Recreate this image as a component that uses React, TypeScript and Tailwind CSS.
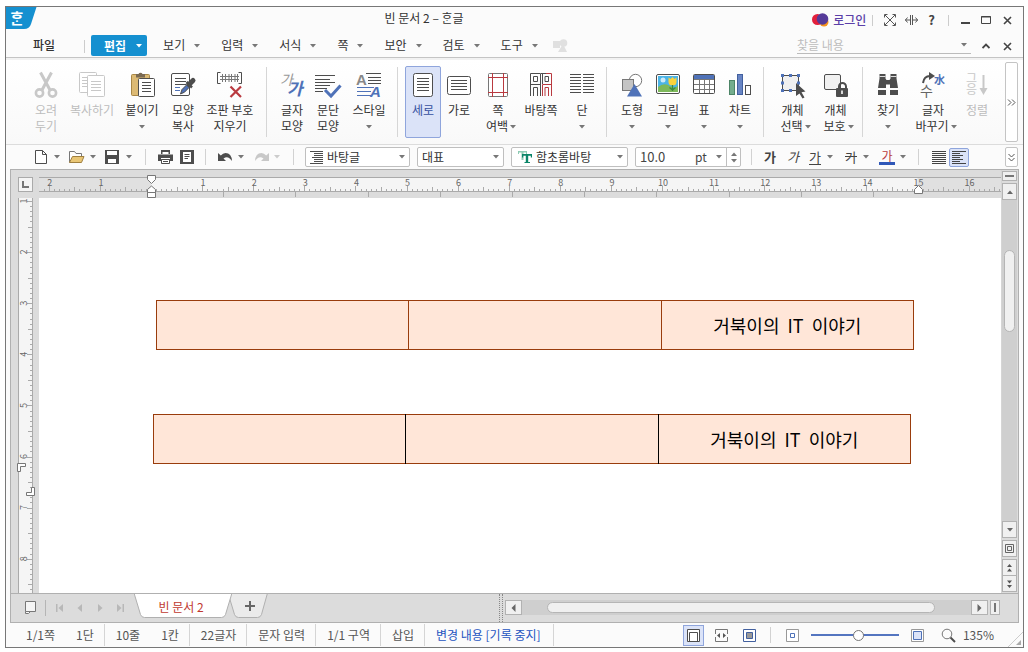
import type { ReactNode } from "react";

const INK = "#4d4d4d";
const BLUE = "#4f72b8";
const RED = "#b93a40";
const FADED = "#c8c8c8";
const FONT = "'Noto Sans CJK KR', sans-serif";

function Caret({ className = "text-[#777]" }: { className?: string }) {
  return (
    <svg width="6" height="4" viewBox="0 0 6 4" className={`inline-block shrink-0 ${className}`} aria-hidden="true">
      <path d="M0 0h6L3 3.5z" fill="currentColor" />
    </svg>
  );
}

function Icon({ children }: { children: ReactNode }) {
  return (
    <svg width="28" height="28" viewBox="0 0 28 28" fill="none" className="shrink-0 overflow-visible" aria-hidden="true">
      {children}
    </svg>
  );
}

function Lines({ x1, x2, ys, color = INK }: { x1: number; x2: number; ys: number[]; color?: string }) {
  return <path d={ys.map((y) => `M${x1} ${y}.5H${x2}`).join("")} stroke={color} />;
}

const icons = {
  cut: (
    <Icon>
      <path d="M8.5 1.5 L18 19 M19.5 1.5 L10 19" stroke={FADED} strokeWidth="3" />
      <circle cx="7.5" cy="22" r="3.6" stroke={FADED} strokeWidth="2.6" />
      <circle cx="20.5" cy="22" r="3.6" stroke={FADED} strokeWidth="2.6" />
    </Icon>
  ),
  copy: (
    <Icon>
      <rect x="1.5" y="1.5" width="17" height="20" rx="1" stroke={FADED} fill="#fff" />
      <Lines x1={4} x2={12} ys={[6, 9, 12, 15]} color={FADED} />
      <rect x="9.5" y="4.5" width="17" height="21" rx="1" stroke={FADED} fill="#fff" />
      <Lines x1={13} x2={23} ys={[10, 13, 16, 19]} color={FADED} />
    </Icon>
  ),
  paste: (
    <Icon>
      <rect x="3.5" y="3.5" width="18" height="21" rx="1" fill="#dcba74" stroke="#a88747" />
      <path d="M8 6.5V3h2.5a2.2 2.2 0 0 1 4 0H17v3.500z" fill="#7a6a52" />
      <rect x="10.500" y="7.500" width="16" height="18" rx="1" stroke={INK} fill="#fff" />
      <Lines x1={14} x2={23} ys={[11, 14, 17, 20]} />
    </Icon>
  ),
  format: (
    <Icon>
      <rect x="2.500" y="2.500" width="18" height="22" rx="1.500" stroke={INK} fill="#fff" />
      <Lines x1={6} x2={17} ys={[7, 10, 13]} />
      <Lines x1={6} x2={11} ys={[16, 19]} color={BLUE} />
      <path d="M11.500 23 L13 18.500 L19 12.500 L21.500 15 L15.500 21.200z" fill={BLUE} stroke={INK} />
      <path d="M17.500 11 L23 16.500" stroke={INK} strokeWidth="2.500" />
      <path d="M20 13.500 L24 9.500" stroke={INK} strokeWidth="5" strokeLinecap="round" />
    </Icon>
  ),
  marks: (
    <Icon>
      <path d="M4.500 1.500H1.500V12.500H4.500 M22.500 1.500H25.500V12.500H22.500" stroke={INK} />
      <path d="M4 5.500H23 M4 8.500H23 M6.500 3V11 M9.500 3V11 M13 3V11 M15.500 3V11 M19 3V11 M21.500 3V11" stroke="#777" />
      <path d="M14.500 15.500 L25 26 M25 15.500 L14.500 26" stroke={RED} strokeWidth="2.200" />
    </Icon>
  ),
  letter: (
    <Icon>
      <text x="2" y="14" fontSize="14" fill="#999" fontFamily={FONT} fontStyle="italic">가</text>
      <text x="9" y="24" fontSize="17" fill={BLUE} fontFamily={FONT} fontWeight="700" fontStyle="italic">가</text>
    </Icon>
  ),
  paragraph: (
    <Icon>
      <Lines x1={1} x2={21} ys={[4, 11]} />
      <Lines x1={1} x2={16} ys={[8, 14]} />
      <Lines x1={1} x2={13} ys={[17]} />
      <Lines x1={1} x2={9} ys={[20]} />
      <path d="M11 19 L17 25 L26.500 14.500" stroke={BLUE} strokeWidth="3" />
    </Icon>
  ),
  style: (
    <Icon>
      <text x="1" y="13.500" fontSize="15" fill="#888" fontFamily="'Liberation Sans', sans-serif" fontWeight="700">A</text>
      <Lines x1={11} x2={26} ys={[2]} />
      <Lines x1={13} x2={26} ys={[6, 9, 12]} />
      <Lines x1={2} x2={19} ys={[16]} color={BLUE} />
      <Lines x1={2} x2={16} ys={[20, 24]} color={BLUE} />
      <text x="15" y="26" fontSize="15" fill={BLUE} fontFamily="'Liberation Sans', sans-serif" fontWeight="700" fontStyle="italic">A</text>
    </Icon>
  ),
  portrait: (
    <Icon>
      <rect x="4.500" y="2.500" width="19" height="23" rx="2" stroke={INK} fill="#fff" />
      <Lines x1={8} x2={20} ys={[7, 10, 13, 16, 19]} />
    </Icon>
  ),
  landscape: (
    <Icon>
      <rect x="2.500" y="5.500" width="23" height="18" rx="2" stroke={INK} fill="#fff" />
      <Lines x1={6} x2={22} ys={[9, 12, 15, 18]} />
    </Icon>
  ),
  margins: (
    <Icon>
      <rect x="4.500" y="2.500" width="19" height="23" rx="1" stroke="#777" fill="#fff" />
      <path d="M8.500 2V26 M19.500 2V26 M4 6.500H24 M4 21.500H24" stroke={RED} />
    </Icon>
  ),
  master: (
    <Icon>
      <path d="M13.500 2.500H3.500V25 M13.500 2.500V25 M3.500 13.500H13.500" stroke={INK} />
      <path d="M6.500 5.500h4v5h-4z M6.500 25V16.500h4V25" stroke={INK} />
      <path d="M14 2.500H19" stroke={INK} />
      <path d="M19 2.500H24.500V25 M15.500 25V13.500H24.500" stroke={RED} />
      <path d="M15.500 2.500V13 M18 5.500h3.500v5H18z" stroke={INK} />
      <path d="M18 25V16.500h3.500V25" stroke={RED} />
    </Icon>
  ),
  columns: (
    <Icon>
      <Lines x1={2} x2={13} ys={[3, 6, 9, 12, 15, 18, 21]} />
      <Lines x1={15} x2={26} ys={[3, 6, 9, 12, 15, 18, 21]} />
    </Icon>
  ),
  shapes: (
    <Icon>
      <circle cx="17.500" cy="9.500" r="6.200" stroke="#777" fill="#fff" />
      <rect x="4.500" y="8.500" width="11" height="11" fill="#c4c4c4" stroke="#777" />
      <path d="M16.500 13 L24 25.500H9z" fill={BLUE} />
    </Icon>
  ),
  picture: (
    <Icon>
      <rect x="2.500" y="3.500" width="23" height="19" rx="1.500" stroke={INK} fill="#fff" />
      <rect x="4" y="5" width="20" height="16" fill="#4bb4e6" />
      <path d="M4 16 Q10 11 16 15 T24 14 V21 H4z" fill="#7db85a" />
      <circle cx="9" cy="9" r="2.500" fill="#cdeaf8" />
      <path d="M14.500 6.500 L16.500 8 L18.500 6 L20.500 8 L22.500 6.500 V11 a4 3.500 0 0 1-8 0z" fill="#fbd23c" />
      <path d="M18.500 14V20 M18.500 19 L15.500 16.500 M18.500 19 L21.500 16.500" stroke="#3d8a3d" strokeWidth="1.300" />
    </Icon>
  ),
  table: (
    <Icon>
      <rect x="3.500" y="3.500" width="21" height="19" rx="1" stroke={INK} fill="#fff" />
      <rect x="4" y="4" width="20" height="4" fill={BLUE} />
      <path d="M4 8.500H24 M4 13.500H24 M4 18.500H24 M9.500 8.500V22 M14.500 8.500V22 M19.500 8.500V22" stroke="#777" />
    </Icon>
  ),
  chart: (
    <Icon>
      <rect x="3.500" y="9.500" width="5" height="14" fill="#74ad8d" stroke="#4d8567" />
      <rect x="11.500" y="3.500" width="5" height="20" fill="#6885c4" stroke="#42609f" />
      <rect x="19.500" y="14.500" width="5" height="9" fill="#fff" stroke={INK} />
    </Icon>
  ),
  select: (
    <Icon>
      <rect x="3.500" y="4.500" width="16" height="15" stroke={INK} fill="#f0f0f0" />
      <path d="M2 3h3v3h-3z M10 3h3v3h-3z M18 3h3v3h-3z M2 10.500h3v3h-3z M18 10.500h3v3h-3z M2 18h3v3h-3z M10 18h3v3h-3z" fill={BLUE} />
      <path d="M17 12 L26.500 20.500 L22.500 21.200 L25.500 26.500 L23.500 27.500 L20.500 22.500 L17 25z" fill={INK} />
    </Icon>
  ),
  protect: (
    <Icon>
      <rect x="2.500" y="3.500" width="16" height="15" rx="1.500" stroke={INK} fill="#f0f0f0" />
      <path d="M17 18v-2.500a3.500 3.500 0 0 1 7 0V18" stroke={INK} strokeWidth="2" />
      <rect x="14" y="17" width="12" height="9" rx="1" fill={INK} />
      <path d="M20 19.500v3.500" stroke="#fff" strokeWidth="1.600" />
    </Icon>
  ),
  find: (
    <Icon>
      <path d="M5.500 3H11.500V7.500L12.500 9H15.500L16.500 7.500V3H22.500V7.500L24 17H16V13.500H12V17H4L5.500 7.500z" fill={INK} />
      <path d="M4 19h8v5H4z M16 19h8v5h-8z" fill={INK} />
      <path d="M5.500 5.500h6 M16.500 5.500h6" stroke="#ddd" />
    </Icon>
  ),
  convert: (
    <Icon>
      <path d="M4 12 Q5 5 11 5" stroke={INK} strokeWidth="2" />
      <path d="M10 1 L16 5 L10 9z" fill={INK} />
      <text x="15" y="13" fontSize="11" fill={BLUE} fontFamily={FONT} fontWeight="700">水</text>
      <text x="1" y="24.500" fontSize="14" fill="#666" fontFamily={FONT}>수</text>
    </Icon>
  ),
  sort: (
    <Icon>
      <text x="3" y="12" fontSize="12" fill={FADED} fontFamily={FONT}>그</text>
      <text x="3" y="23" fontSize="12" fill={FADED} fontFamily={FONT}>응</text>
      <path d="M20.500 4V18" stroke={FADED} strokeWidth="2" />
      <path d="M16.500 17h8L20.500 24z" fill={FADED} />
    </Icon>
  ),
};

type Tool = {
  icon: keyof typeof icons;
  lines: string[];
  width: string;
  caret?: boolean;
  disabled?: boolean;
  active?: boolean;
};

const ribbon: Tool[][] = [
  [
    { icon: "cut", lines: ["오려", "두기"], width: "w-[42px]", disabled: true },
    { icon: "copy", lines: ["복사하기"], width: "w-[50px]", disabled: true },
    { icon: "paste", lines: ["붙이기"], width: "w-[50px]", caret: true },
    { icon: "format", lines: ["모양", "복사"], width: "w-[32px]" },
    { icon: "marks", lines: ["조판 부호", "지우기"], width: "w-[62px]" },
  ],
  [
    { icon: "letter", lines: ["글자", "모양"], width: "w-[36px]" },
    { icon: "paragraph", lines: ["문단", "모양"], width: "w-[36px]" },
    { icon: "style", lines: ["스타일"], width: "w-[46px]", caret: true },
  ],
  [
    { icon: "portrait", lines: ["세로"], width: "w-[36px]", active: true },
    { icon: "landscape", lines: ["가로"], width: "w-[36px]" },
    { icon: "margins", lines: ["쪽", "여백"], width: "w-[42px]", caret: true },
    { icon: "master", lines: ["바탕쪽"], width: "w-[44px]" },
    { icon: "columns", lines: ["단"], width: "w-[38px]", caret: true },
  ],
  [
    { icon: "shapes", lines: ["도형"], width: "w-[36px]", caret: true },
    { icon: "picture", lines: ["그림"], width: "w-[36px]", caret: true },
    { icon: "table", lines: ["표"], width: "w-[36px]", caret: true },
    { icon: "chart", lines: ["차트"], width: "w-[36px]", caret: true },
  ],
  [
    { icon: "select", lines: ["개체", "선택"], width: "w-[43px]", caret: true },
    { icon: "protect", lines: ["개체", "보호"], width: "w-[43px]", caret: true },
  ],
  [
    { icon: "find", lines: ["찾기"], width: "w-[36px]", caret: true },
    { icon: "convert", lines: ["글자", "바꾸기"], width: "w-[54px]", caret: true },
    { icon: "sort", lines: ["정렬"], width: "w-[34px]", disabled: true },
  ],
];

function RibbonButton({ tool }: { tool: Tool }) {
  const tone = tool.disabled ? "text-[#bdbdbd]" : tool.active ? "text-[#3550a0]" : "text-[#333]";
  const frame = tool.active ? "border-[#8fa5dc] bg-[#dbe3f8]" : "border-transparent";
  return (
    <button
      type="button"
      disabled={tool.disabled}
      className={`flex h-[72px] shrink-0 flex-col items-center rounded-xs border pt-1 leading-4 whitespace-nowrap ${tool.width} ${tone} ${frame}`}
    >
      {icons[tool.icon]}
      <span className="mt-[3px] h-4">{tool.lines[0]}</span>
      <span className="flex h-4 items-center gap-0.5">
        {tool.lines[1]}
        {tool.caret && <Caret className={tool.lines[1] ? "-mr-1.5 mt-0.5 text-[#777]" : "mt-0.5 text-[#777]"} />}
      </span>
    </button>
  );
}

const menus = ["보기", "입력", "서식", "쪽", "보안", "검토", "도구"];

function Header() {
  return (
    <header className="bg-[#fbfbfb]">
      <div className="flex h-[26px] items-start">
        <div className="relative h-[22px] w-[30px] shrink-0 text-center text-[15px] leading-[22px] font-bold text-white">
          <svg width="31" height="22" viewBox="0 0 31 22" className="absolute top-0 left-0" aria-hidden="true">
            <path d="M0 0H30.500L25 17Q23.500 22 18 22H0z" fill="#1590d0" />
          </svg>
          <span className="relative mr-2">{"\u1112\u119E\u11AB"}</span>
        </div>
        <h1 className="flex-1 text-center leading-[22px] text-[#333]">빈 문서 2 – {"\u1112\u119E\u11AB"}글</h1>
        <div className="flex h-[26px] items-center pr-[11px] text-[#444]">
          <a href="#login" className="flex items-center gap-1 font-medium text-[#5b3fa8]">
            <svg width="17" height="14" viewBox="0 0 17 14" aria-hidden="true">
              <circle cx="5.500" cy="6.500" r="5.500" fill="#e2203c" />
              <circle cx="12" cy="9" r="4.500" fill="#f7941d" />
              <circle cx="10.500" cy="6" r="5.800" fill="#553a99" />
            </svg>
            로그인
          </a>
          <span className="mr-[11px] ml-[6px] h-[11px] w-px bg-[#ccc]" />
          <button type="button" aria-label="전체 화면" className="mr-[9px]">
            <svg width="12" height="12" viewBox="0 0 12 12" fill="none" stroke="#555" aria-hidden="true">
              <path d="M.5 3.500V.5H3.500 M8.500 .5H11.500V3.500 M11.500 8.500V11.500H8.500 M3.500 11.500H.5V8.500 M1 1L11 11 M11 1L1 11" />
            </svg>
          </button>
          <button type="button" aria-label="크기 조절" className="mr-[10px]">
            <svg width="13" height="12" viewBox="0 0 13 12" fill="none" stroke="#555" aria-hidden="true">
              <path d="M5.500 1V11 M7.500 1V11 M0 6H5 M8 6H13 M2.500 3.500L.5 6L2.500 8.500 M10.500 3.500L12.500 6L10.500 8.500" />
            </svg>
          </button>
          <button type="button" aria-label="도움말" className="text-[13px] leading-4 font-bold">?</button>
          <span className="mr-[11px] ml-[13px] h-[11px] w-px bg-[#ccc]" />
          <button type="button" aria-label="최소화" className="mr-[11px]">
            <svg width="10" height="10" aria-hidden="true"><path d="M1 7h9v2H1z" fill="#444" /></svg>
          </button>
          <button type="button" aria-label="최대화" className="mr-[12px]">
            <svg width="10" height="10" fill="none" stroke="#444" aria-hidden="true"><path d="M.5 1.500H9.500V8.500H.5z M0 2H10" /></svg>
          </button>
          <button type="button" aria-label="닫기">
            <svg width="9" height="9" fill="none" stroke="#444" strokeWidth="1.600" aria-hidden="true"><path d="M1 1L8 8M8 1L1 8" /></svg>
          </button>
        </div>
      </div>

      <nav className="flex h-[25px] items-start border-b border-[#c4c4c4] pr-[11px] leading-[21px] text-[#333]">
        <button type="button" className="mt-px ml-[27px] h-[21px] font-medium">파일</button>
        <span className="mt-[7px] mr-[6px] ml-[29px] h-[13px] w-px bg-[#ccc]" />
        <button type="button" className="mt-0.5 mr-4 flex h-[21px] w-14 items-center justify-center gap-2.5 rounded-xs bg-[#1590d0] pb-px pl-2 font-bold text-white">
          편집
          <Caret className="mt-0.5 text-white" />
        </button>
        <div className="mt-px flex gap-[21px]">
          {menus.map((m) => (
            <button type="button" key={m} className="flex h-[21px] items-center gap-[9px]">
              {m}
              <Caret className="mt-0.5 text-[#777]" />
            </button>
          ))}
        </div>
        <svg width="15" height="13" viewBox="0 0 15 13" className="mt-1.5 ml-[15px]" fill="#e0e0e0" aria-hidden="true">
          <path d="M0 2h7v7H0z M10 5L14 13H5z" />
          <circle cx="10.500" cy="4" r="3.800" />
        </svg>
        <div className="ml-auto flex h-[21px] w-[174px] items-center border-b border-[#bbb] pt-1">
          <input aria-label="찾을 내용" placeholder="찾을 내용" className="h-4 w-0 flex-1 bg-transparent leading-4 outline-none placeholder:text-[#bdbdbd]" />
          <Caret className="mr-1 text-[#777]" />
        </div>
        <button type="button" aria-label="리본 접기" className="mt-[9px] ml-[11px]">
          <svg width="8" height="8" fill="none" stroke="#444" strokeWidth="1.800" className="block" aria-hidden="true"><path d="M.5 6L4 2.500L7.500 6" /></svg>
        </button>
        <button type="button" aria-label="문서 닫기" className="mt-[9px] ml-[13px]">
          <svg width="9" height="9" fill="none" stroke="#444" strokeWidth="1.600" className="block" aria-hidden="true"><path d="M1 1L8 8M8 1L1 8" /></svg>
        </button>
      </nav>
    </header>
  );
}

function Ribbon() {
  return (
    <section aria-label="편집" className="flex border-t-2 border-b border-t-[#f2f2f2] border-b-[#dcdcdc] bg-linear-to-b from-white to-[#f9f9f9] pt-1.5 pb-1.5 pl-[19px] pr-[5px]">
      {ribbon.map((group, i) => (
        <div key={i} className="flex">
          {i > 0 && <span className="mt-px mr-[7px] ml-[5px] h-[70px] w-px bg-[#d6d6d6]" />}
          {group.map((tool) => (
            <RibbonButton key={tool.icon} tool={tool} />
          ))}
        </div>
      ))}
      <button type="button" aria-label="더 보기" className="-mt-1 -mb-1 ml-auto flex w-[13px] items-center justify-center rounded-xs border border-[#c4c4c4] bg-white">
        <svg width="9" height="7" fill="none" stroke="#555" aria-hidden="true"><path d="M1 .5L4 3.500L1 6.500M5 .5L8 3.500L5 6.500" /></svg>
      </button>
    </section>
  );
}

function Divider({ className = "mx-3" }: { className?: string }) {
  return <span className={`h-4 w-px shrink-0 bg-[#d2d2d2] ${className}`} />;
}

function Combo({ label, value, width, lead }: { label: string; value: string; width: string; lead?: ReactNode }) {
  return (
    <label className={`flex h-5 items-center rounded-xs border border-[#bfbfbf] bg-white pr-1 pl-1 ${width}`}>
      {lead}
      <select aria-label={label} defaultValue={value} className="h-[18px] w-0 flex-1 appearance-none bg-transparent leading-[18px] text-[#333] outline-none">
        <option>{value}</option>
      </select>
      <Caret />
    </label>
  );
}

function Toolbar() {
  return (
    <section aria-label="서식 도구 모음" className="flex h-6 items-center bg-[#fbfbfb] pr-[5px] pl-7 text-[#444]">
      <button type="button" aria-label="새 문서" className="flex items-center gap-1.5">
        <svg width="14" height="16" fill="#fff" stroke={INK} aria-hidden="true"><path d="M1.500 1.500H8.500L12.500 5.500V14.500H1.500z M8.500 1.500V5.500H12.500" /></svg>
        <Caret />
      </button>
      <button type="button" aria-label="불러오기" className="ml-2 flex items-center gap-[5px]">
        <svg width="17" height="16" fill="none" aria-hidden="true">
          <path d="M1.500 13.500V2.500H6.500L8 4.500H13.500V7" stroke="#777" fill="#fff" />
          <path d="M4.500 7.500H16L13.500 13.500H1.500z" fill="#e9c675" stroke="#a08040" />
        </svg>
        <Caret />
      </button>
      <button type="button" aria-label="저장" className="ml-[9px] flex items-center gap-[7px]">
        <svg width="14" height="16" aria-hidden="true">
          <path d="M0 1h14v14H0z" fill={INK} />
          <path d="M2 2h10v4H2z M3 10h8v4H3z" fill="#fff" />
        </svg>
        <Caret />
      </button>
      <Divider className="mr-3 ml-[13px]" />
      <button type="button" aria-label="인쇄" className="mr-[7px]">
        <svg width="15" height="16" className="block" aria-hidden="true">
          <path d="M3 1h9v4H3z M0 5.500h15v6.500H0z" fill={INK} />
          <path d="M4.500 3h6v2h-6z M3 9h9v1.200H3z" fill="#fff" />
          <path d="M3.500 10.500h8v4h-8z" fill="#fff" stroke={INK} />
          <path d="M5 12.500h5" stroke={INK} />
        </svg>
      </button>
      <button type="button" aria-label="미리 보기">
        <svg width="14" height="16" className="block" aria-hidden="true">
          <path d="M0 1h14v14H0z" fill={INK} />
          <path d="M3 3h8v10H3z" fill="#fff" />
          <path d="M4.500 5.500h5M4.500 7.500h5M4.500 9.500h3.500" stroke={INK} />
        </svg>
      </button>
      <Divider className="mr-3 ml-[11px]" />
      <button type="button" aria-label="되돌리기" className="flex items-center gap-[5px]">
        <svg width="15" height="12" aria-hidden="true"><path d="M0 2V10H8L5.500 7.500Q10 4 14 10Q13.500 2 7.500 2Q5 2 2.800 4.500z" fill={INK} /></svg>
        <Caret />
      </button>
      <button type="button" aria-label="다시 실행" disabled className="ml-2.5 flex items-center gap-[5px]">
        <svg width="15" height="12" aria-hidden="true"><path d="M15 2V10H7L9.500 7.500Q5 4 1 10Q1.500 2 7.500 2Q10 2 12.200 4.500z" fill={FADED} /></svg>
        <Caret className="text-[#ccc]" />
      </button>
      <Divider className="mr-[11px] ml-[13px]" />
      <div className="flex gap-[7px]">
        <Combo
          label="스타일"
          value="바탕글"
          width="w-[105px]"
          lead={
            <svg width="13" height="13" className="mr-1" aria-hidden="true">
              <path d="M0 .5h13M4 2.500h9M4 4.500h9M2 6.500h11M4 8.500h9M4 10.500h9M0 12.500h13" stroke={INK} />
            </svg>
          }
        />
        <Combo label="언어" value="대표" width="w-[87px]" />
        <Combo
          label="글꼴"
          value="함초롬바탕"
          width="w-[117px]"
          lead={
            <svg width="14" height="14" className="mr-1 ml-0.5" aria-hidden="true">
              <path d="M0 1h9v3H8V2.500H5.500V10H3.500V2.500H1V4H0z" fill="#8ecbb4" />
              <path d="M4 4h10v3.500h-1.200V5.800h-2.600V12H12v1H6.500v-1h1.300V5.800H5.200V7.500H4z" fill="#0b8568" />
            </svg>
          }
        />
        <div className="flex h-5 w-[106px] items-center rounded-xs border border-[#bfbfbf] bg-white pl-1">
          <input aria-label="글자 크기" defaultValue="10.0" className="w-0 flex-1 bg-transparent text-[13px] leading-[18px] outline-none" />
          <select aria-label="단위" defaultValue="pt" className="mr-1 w-[17px] appearance-none bg-transparent leading-[18px] outline-none">
            <option>pt</option>
          </select>
          <Caret className="mr-1 text-[#777]" />
          <span className="flex h-full w-[14px] flex-col items-center justify-around border-l border-[#bfbfbf] py-0.5">
            <button type="button" aria-label="크게" className="flex"><Caret className="rotate-180 text-[#777]" /></button>
            <button type="button" aria-label="작게" className="flex"><Caret /></button>
          </span>
        </div>
      </div>
      <Divider className="mr-3 ml-2.5" />
      <div className="flex items-center text-[13px] leading-4">
        <button type="button" aria-label="진하게" className="w-[23px] text-left font-bold">가</button>
        <button type="button" aria-label="기울임" className="w-[22px] text-left italic">가</button>
        <button type="button" aria-label="밑줄" className="flex w-9 items-center gap-[6px]">
          <span className="border-b border-[#444] leading-[14px]">가</span>
          <Caret />
        </button>
        <button type="button" aria-label="취소선" className="flex w-[34px] items-center gap-[6px]">
          <span className="line-through">가</span>
          <Caret />
        </button>
        <button type="button" aria-label="글자 색" className="flex items-center gap-[5px]">
          <span className="w-4 border-b-3 border-[#3058b8] text-center text-xs leading-[13px] text-[#b93a40]">가</span>
          <Caret />
        </button>
      </div>
      <Divider className="mr-2.5 ml-3" />
      <button type="button" aria-label="양쪽 정렬" className="p-[3px]">
        <svg width="14" height="13" className="block" aria-hidden="true"><path d="M0 .5h14M0 2.500h14M0 4.500h14M0 6.500h14M0 8.500h14M0 10.500h14M0 12.500h14" stroke="#444" /></svg>
      </button>
      <button type="button" aria-label="왼쪽 정렬" className="rounded-xs border border-[#8fa5dc] bg-[#dbe3f8] p-[2px]">
        <svg width="14" height="13" className="block" aria-hidden="true"><path d="M0 .5h14M0 2.500h8M0 4.500h11M0 6.500h8M0 8.500h11M0 10.500h8M0 12.500h14" stroke="#444" /></svg>
      </button>
      <button type="button" aria-label="도구 더 보기" className="ml-auto flex h-5 w-[13px] items-center justify-center rounded-xs border border-[#c4c4c4] bg-white">
        <svg width="7" height="9" fill="none" stroke="#555" aria-hidden="true"><path d="M.5 1L3.500 4L6.500 1M.5 5L3.500 8L6.500 5" /></svg>
      </button>
    </section>
  );
}

const CM = 51.1;
const tickAt = (origin: number, i: number) => Math.round(origin + (i * CM) / 10) + 0.5;
const range = (from: number, to: number) => Array.from({ length: to - from + 1 }, (_, i) => from + i);
const tickLength = (i: number) => (i % 10 === 0 ? 5 : i % 5 === 0 ? 4 : 2);

function HorizontalRuler() {
  const zero = 112;
  return (
    <svg className="h-7 w-full" aria-label="가로 눈금자">
      <rect x="0" y="7" width="100%" height="15" fill="#e0e0e0" />
      <rect x={zero} y="7" width={CM * 15} height="15" fill="#f5f5f5" />
      <path d="M0 7.500H3000 M0 21.500H3000" stroke="#aaa" />
      <path d={range(-21, 400).map((i) => `M${tickAt(zero, i)} 21V${21 - tickLength(i)}`).join("")} stroke="#aaa" />
      <path d={range(1, 10).map((i) => `M${Math.round(zero + i * 72.2) + 0.5} 22V27`).join("")} stroke="#aaa" />
      {range(-2, 16)
        .filter((n) => n !== 0)
        .map((n) => (
          <text key={n} x={zero + 1 + n * CM} y="16" fontSize="9" textAnchor="middle" fill="#666" fontFamily={FONT}>
            {Math.abs(n)}
          </text>
        ))}
      <g fill="#fff" stroke="#777">
        <path d="M108.500 5.500H116.500V9.500L112.500 13.500L108.500 9.500z" />
        <path d="M112.500 16L116.500 19.500V22.500H108.500V19.500z M108.500 22.500H116.500V27.500H108.500z" />
        <path d="M879.500 15.500L883.500 19.500V23.500H875.500V19.500z" />
      </g>
    </svg>
  );
}

function VerticalRuler() {
  const one = 3;
  return (
    <div className="relative overflow-hidden">
      <svg className="absolute inset-0 h-full w-7" aria-label="세로 눈금자">
        <rect x="7" y="0" width="15" height="100%" fill="#f5f5f5" />
        <path d="M7.500 0V3000 M21.500 0V3000" stroke="#aaa" />
        <path d={range(0, 400).map((i) => `M21 ${tickAt(one, i)}H${21 - tickLength(i)}`).join("")} stroke="#aaa" />
        {range(1, 8).map((n) => (
          <text
            key={n}
            transform={`translate(16 ${one + (n - 1) * CM}) rotate(-90)`}
            fontSize="9"
            textAnchor="middle"
            fill="#666"
            fontFamily={FONT}
          >
            {n}
          </text>
        ))}
        <g fill="#fff" stroke="#777">
          <path d="M6.500 265.500H14.500V268.500H9.500V273.500H6.500z" />
          <path d="M20.500 289.500H23.500V297.500H15.500V294.500H20.500z" />
        </g>
      </svg>
    </div>
  );
}

const BOX = "flex shrink-0 items-center justify-center border border-[#b2b2b2] bg-[#f0f0f0]";

function VerticalScroll() {
  return (
    <div className="row-span-2 flex flex-col items-center border-l border-[#d5d5d5] bg-[#dcdcdc] py-px pr-px">
      <button type="button" aria-label="가로로 나누기" className={`${BOX} h-2.5 w-[15px]`}>
        <span className="h-0.5 w-[9px] bg-[#777]" />
      </button>
      <button type="button" aria-label="위로" className={`${BOX} mt-0.5 h-[17px] w-[15px]`}>
        <Caret className="rotate-180 text-[#666]" />
      </button>
      <div className="flex w-[15px] flex-1 flex-col items-center bg-[#cfcfcf] pt-[50px]">
        <div className="h-[82px] w-[11px] rounded-full border border-[#b5b5b5] bg-[#f0f0f0]" />
      </div>
      <button type="button" aria-label="아래로" className={`${BOX} h-[17px] w-[15px]`}>
        <Caret className="text-[#666]" />
      </button>
      <button type="button" aria-label="찾아가기" className={`${BOX} mt-0.5 h-[17px] w-[15px]`}>
        <svg width="9" height="9" fill="none" stroke="#666" aria-hidden="true"><path d="M.5 .5h8v8h-8z M2.500 2.500h4v4h-4z" /></svg>
      </button>
      <button type="button" aria-label="이전 쪽" className={`${BOX} mt-0.5 h-[17px] w-[15px]`}>
        <svg width="5" height="8" fill="#555" aria-hidden="true"><path d="M2.500 0L5 3H0z M2.500 4.500L5 7.500H0z" /></svg>
      </button>
      <button type="button" aria-label="다음 쪽" className={`${BOX} -mt-px h-[17px] w-[15px]`}>
        <svg width="5" height="8" fill="#555" aria-hidden="true"><path d="M0 .5h5L2.500 3.500z M0 5h5L2.500 8z" /></svg>
      </button>
    </div>
  );
}

function DocTable({ className, inner, label }: { className: string; inner: string; label: string }) {
  return (
    <table aria-label={label} className={`w-[758px] table-fixed border-collapse border border-[#993c0c] bg-[#ffe6d8] text-lg leading-6 text-black ${className}`}>
      <tbody>
        <tr className="h-[49px]">
          <td />
          <td className={`border-x ${inner}`} />
          <td className="text-center whitespace-pre">거북이의{"  "}IT{"  "}이야기</td>
        </tr>
      </tbody>
    </table>
  );
}

function Arrow({ d, w = 5 }: { d: string; w?: number }) {
  return (
    <svg width={w} height="8" viewBox={`0 0 ${w} 8`} fill="currentColor" className="block" aria-hidden="true">
      <path d={d} />
    </svg>
  );
}

function TabStrip() {
  return (
    <div className="flex h-[30px] items-start border-y border-[#b0b0b0] bg-[#dcdcdc]">
      <button type="button" aria-label="문서 목록" className="mt-[7px] ml-3.5">
        <svg width="12" height="13" fill="#f5f5f5" stroke="#777" className="block" aria-hidden="true"><path d="M.5 .5h10v10H.5z M.5 10.500V12.500H3.500L5.500 10.500" /></svg>
      </button>
      <span className="mt-1.5 ml-2 h-4 w-px bg-[#b5b5b5]" />
      <div className="mt-[10px] ml-2.5 flex gap-3.5 text-[#b8b8b8]">
        <button type="button" aria-label="처음 탭"><Arrow w={7} d="M0 0h1.500v8H0z M7 0v8L2.500 4z" /></button>
        <button type="button" aria-label="이전 탭"><Arrow d="M5 0v8L.5 4z" /></button>
        <button type="button" aria-label="다음 탭" className="ml-0.5"><Arrow d="M0 0v8L4.500 4z" /></button>
        <button type="button" aria-label="마지막 탭"><Arrow w={7} d="M0 0v8L4.500 4z M5.500 0H7v8H5.500z" /></button>
      </div>
      <button type="button" className="relative z-10 ml-2.5 h-[25px] w-[98px] pr-1 text-[#c0392f]">
        <svg width="98" height="25" viewBox="0 0 98 25" className="absolute top-0 left-0" aria-hidden="true">
          <path d="M0 -1L6.500 20.500Q7.500 23.500 10.500 23.500H87.500Q90.500 23.500 91.500 20.500L98 -1z" fill="#fff" stroke="#b0b0b0" />
        </svg>
        <span className="relative leading-6">빈 문서 2</span>
      </button>
      <button type="button" aria-label="새 탭" className="relative -ml-1 flex h-[25px] w-10 items-center justify-center">
        <svg width="40" height="25" viewBox="0 0 40 25" className="absolute top-0 left-0" aria-hidden="true">
          <path d="M0 -1L6.500 20.500Q7.500 23.500 10.500 23.500H29.500Q32.500 23.500 33.500 20.500L39.500 -1z" fill="#ebebeb" stroke="#b0b0b0" />
          <path d="M17 12h10M22 7v10" stroke="#666" strokeWidth="2" />
        </svg>
      </button>
      <div className="ml-auto flex w-[519px] items-start">
        <span className="h-7 w-1 border-x border-dotted border-[#888]" />
        <button type="button" aria-label="왼쪽으로" className={`${BOX} mt-1.5 ml-0.5 h-[15px] w-[17px] text-[#666]`}>
          <Arrow d="M4.500 0v8L.5 4z" />
        </button>
        <div className="mt-1.5 flex h-[15px] flex-1 items-center bg-[#cfcfcf] pl-[25px] pr-9">
          <div className="h-[11px] w-full rounded-full border border-[#b5b5b5] bg-[#f0f0f0]" />
        </div>
        <button type="button" aria-label="오른쪽으로" className={`${BOX} mt-1.5 h-[15px] w-[17px] text-[#666]`}>
          <Arrow d="M.5 0v8L4.500 4z" />
        </button>
        <button type="button" aria-label="세로로 나누기" className={`${BOX} mt-1.5 mr-[18px] ml-0.5 h-[15px] w-2.5`}>
          <span className="h-[9px] w-0.5 bg-[#777]" />
        </button>
      </div>
    </div>
  );
}

const status: string[][] = [["1/1쪽", "1단"], ["10줄", "1칸"], ["22글자"], ["문자 입력"], ["1/1 구역"], ["삽입"]];

function StatusBar() {
  return (
    <footer className="flex h-6 items-center bg-[#fbfbfb] pl-[9px] leading-6 whitespace-nowrap text-[#555]">
      {status.map((group) => (
        <div key={group[0]} className="flex h-[22px] items-center gap-[21px] border-r border-[#d5d5d5] pr-[10px] pl-[11px]">
          {group.map((t) => (
            <span key={t}>{t}</span>
          ))}
        </div>
      ))}
      <button type="button" className="h-[22px] border-r border-[#d5d5d5] pr-3 pl-[11px] leading-[22px] text-[#2454c0]">변경 내용 [기록 중지]</button>
      <div className="ml-auto flex h-6 items-center">
        <button type="button" aria-label="쪽 윤곽" className="border border-[#8fa5dc] bg-[#dbe3f8] p-[3px]">
          <svg width="13" height="13" fill="#fff" stroke={INK} className="block" aria-hidden="true"><path d="M.5 .5h12v12H.5z M2.500 12.500v-9h8v9" /></svg>
        </button>
        <button type="button" aria-label="폭 맞춤" className="ml-[11px]">
          <svg width="13" height="13" className="block" aria-hidden="true">
            <path d="M.5 5V.5h12V5 M.5 8v4.500h12V8" fill="none" stroke="#777" />
            <path d="M5 4v5L2 6.500z M8 4v5L11 6.500z" fill="#555" />
          </svg>
        </button>
        <button type="button" aria-label="쪽 맞춤" className="ml-[15px]">
          <svg width="13" height="13" className="block" aria-hidden="true">
            <path d="M.5 .5h12v12H.5z" fill="#fff" stroke="#42609f" />
            <path d="M3.500 3.500h6v6h-6z" fill="#999" stroke="#42609f" />
          </svg>
        </button>
        <Divider className="mr-[15px] ml-3.5" />
        <button type="button" aria-label="축소">
          <svg width="13" height="13" fill="#fff" className="block" aria-hidden="true">
            <path d="M.5 .5h12v12H.5z" stroke="#999" />
            <path d="M4.500 4.500h4v4h-4z" stroke={BLUE} />
          </svg>
        </button>
        <input
          type="range"
          aria-label="확대/축소"
          min={0}
          max={100}
          defaultValue={54}
          className="mx-3 h-0.5 w-[88px] appearance-none bg-[#5475c0] [&::-webkit-slider-thumb]:size-[11px] [&::-webkit-slider-thumb]:appearance-none [&::-webkit-slider-thumb]:rounded-full [&::-webkit-slider-thumb]:border [&::-webkit-slider-thumb]:border-[#777] [&::-webkit-slider-thumb]:bg-white"
        />
        <button type="button" aria-label="확대">
          <svg width="13" height="13" fill="#fff" className="block" aria-hidden="true">
            <path d="M.5 .5h12v12H.5z" stroke="#999" />
            <path d="M2.500 2.500h8v8h-8z" stroke={BLUE} fill="#dbe3f8" />
          </svg>
        </button>
        <button type="button" aria-label="확대 비율" className="ml-[17px] flex items-center gap-[7px] text-xs">
          <svg width="15" height="15" fill="none" aria-hidden="true">
            <circle cx="6" cy="6" r="4.800" stroke="#777" />
            <path d="M9.500 9.500L14 14" stroke={INK} strokeWidth="2" />
          </svg>
          135%
        </button>
        <svg width="15" height="15" className="ml-[14px] self-end" aria-hidden="true">
          <path d="M0 15L15 0" stroke="#ccc" />
          <path d="M13 8v5H8z" fill="#aaa" />
        </svg>
      </div>
    </footer>
  );
}

export default function App() {
  return (
    <div className="flex min-h-screen flex-col bg-white pt-1.5 pr-1 pb-1 pl-[5px] font-['Noto_Sans_CJK_KR',sans-serif] text-xs">
      <div className="flex flex-1 flex-col border border-[#777] bg-[#fbfbfb]">
        <Header />
        <Ribbon />
        <Toolbar />
        <main className="mx-1 flex flex-1 flex-col border border-b-0 border-[#b0b0b0] bg-[#dcdcdc]">
          <div className="grid flex-1 grid-cols-[28px_1fr_17px] grid-rows-[28px_1fr]">
            <div className="pt-[7px] pl-[7px]">
              <div className="flex size-[15px] items-center justify-center border border-[#aaa] bg-[#f5f5f5]">
                <span className="size-[7px] border-b-2 border-l-2 border-[#777]" />
              </div>
            </div>
            <HorizontalRuler />
            <VerticalScroll />
            <VerticalRuler />
            <article className="bg-white pb-10">
              <DocTable label="첫째 표" className="mt-[102px] ml-[117px]" inner="border-[#993c0c]" />
              <DocTable label="둘째 표" className="mt-16 ml-[114px]" inner="border-black" />
            </article>
          </div>
          <TabStrip />
        </main>
        <StatusBar />
      </div>
    </div>
  );
}
